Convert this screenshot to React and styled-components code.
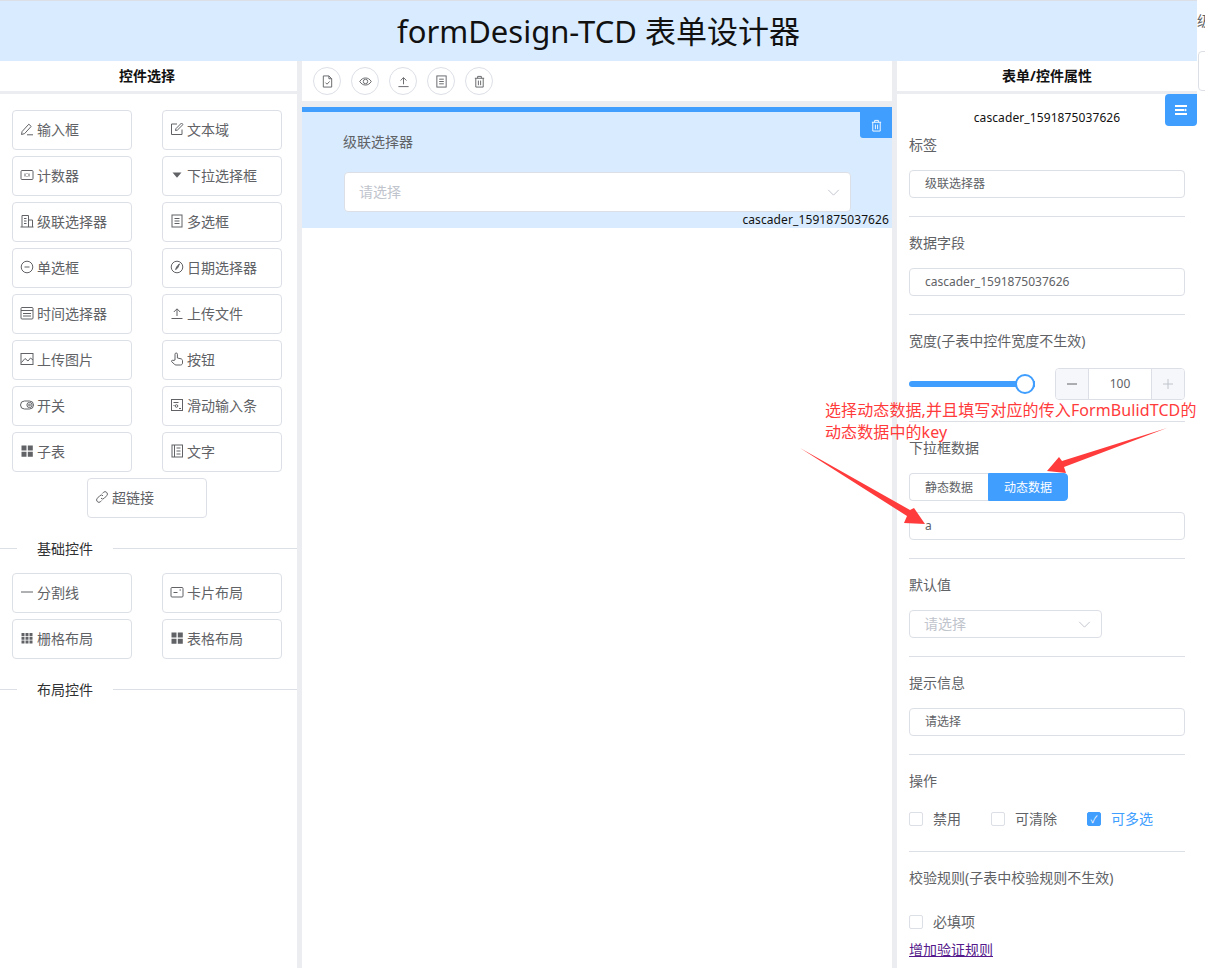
import styled, { createGlobalStyle } from "styled-components";

const GlobalStyle = createGlobalStyle`
  html, body {
    margin: 0;
    padding: 0;
    height: 100%;
    overflow: hidden;
    background: #fff;
    font-family: "Noto Sans", "Noto Sans CJK SC", sans-serif;
    font-size: 14px;
    color: #606266;
  }
  *, *::before, *::after { box-sizing: border-box; }
`;

// icons are drawn on a 14x14 box
const glyphs = {
  pen: <><path d="M1.500 12.500l.6-3L8.800 2.200l2.400 2.200-6.600 7.200z" /><path d="M7 12.800h6" /></>,
  edit: <><path d="M12 7.500v5H1.500V2H7" /><path d="M5.500 8.500l.4-1.800L11.500 1 13 2.500 7.400 8.100z" /></>,
  counter: <><rect x="1" y="2.500" width="12" height="9" rx="1" /><path d="M5 5.500v3M9 5.500v3M7 5v.8M7 8.200V9" /></>,
  caret: <path d="M2.500 4.500h9L7 9.800z" fill="#606266" stroke="none" />,
  cascade: <><path d="M2 13V1.500h6.500V13" /><path d="M8.500 6H12.500V13" /><path d="M.5 13h13M4 4.500h2.500M4 7h2.500M4 9.500h2.500" /></>,
  doc: <><rect x="2" y="1" width="10" height="12" /><path d="M4.500 4.500h5M4.500 7h5M4.500 9.500h5" /></>,
  radio: <><circle cx="7" cy="7" r="5.800" /><path d="M4.500 7h5" /></>,
  compass: <><circle cx="7" cy="7" r="5.800" /><path d="M9.500 3.800L7.600 8 5.600 9.600 6.600 7z" fill="#606266" /></>,
  calendar: <><rect x="1" y="1.500" width="12" height="11.500" rx="1" /><path d="M1 4.500h12M3 7.500h8M3 10h8" /></>,
  upload: <><path d="M1.500 12.500h11" /><path d="M7 10V3M3.800 6L7 2.800 10.200 6" /></>,
  picture: <><rect x="1" y="1.500" width="12" height="11" /><path d="M1.500 10.500L5 6.500l3 2.500 2.500-3L13 8" /></>,
  hand: <path d="M5 8V2.200a1.200 1.200 0 0 1 2.400 0V6l3.600.8c1 .3 1.500 1 1.500 2v2.200c0 1.200-.8 2-2 2H6c-.8 0-1.300-.3-1.800-1L1.600 9.600c-.5-.8.5-1.800 1.400-1.100z" />,
  toggle: <><rect x=".5" y="3" width="13" height="8" rx="4" /><circle cx="9.500" cy="7" r="2.600" /><circle cx="9.500" cy="7" r=".9" /></>,
  slider: <><rect x="1.500" y="1.500" width="11" height="11" /><path d="M3.500 4.500h5M3.500 7.500h1M9 10.500h2" /><circle cx="6.500" cy="8" r="1.300" /></>,
  grid: <path d="M1.500 1.500h5v5h-5zM7.800 1.500h5v5h-5zM1.500 7.800h5v5h-5zM7.800 7.800h5v5h-5z" fill="#606266" stroke="none" />,
  book: <><rect x="2" y="1" width="10.500" height="12" /><path d="M4.500 1v12M6.500 4h4M6.500 7h4M6.500 10h4" /></>,
  link: <><path d="M6 8.200a2.300 2.300 0 0 0 3.300 0l2.400-2.500a2.300 2.300 0 0 0-3.300-3.300L7.300 3.500" /><path d="M8 5.800a2.300 2.300 0 0 0-3.300 0L2.300 8.300a2.300 2.300 0 0 0 3.300 3.300l1.100-1.100" /></>,
  line: <path d="M1 7h12" />,
  card: <><rect x="1" y="2.500" width="12" height="9.500" rx="1" /><path d="M3.500 7.500h4M9.500 5h1.500" /></>,
  table: <path d="M1.500 2h3v3h-3zM5.500 2h3v3h-3zM9.500 2h3v3h-3zM1.500 5.700h3v3h-3zM5.500 5.700h3v3h-3zM9.500 5.700h3v3h-3zM1.500 9.400h3v3h-3zM5.500 9.400h3v3h-3zM9.500 9.400h3v3h-3z" fill="#606266" stroke="none" />,
  fileCheck: <><path d="M2.500 1h6l3 3v9h-9z" /><path d="M8.500 1v3h3M4.800 8.200l1.700 1.700 2.800-3" /></>,
  eye: <><path d="M.8 7C2.300 4.500 4.400 3.200 7 3.200S11.700 4.500 13.200 7C11.700 9.500 9.600 10.800 7 10.800S2.300 9.500.8 7z" /><circle cx="7" cy="7" r="2.400" /></>,
  trash: <path d="M2 3.500h10M5 3.500V1.500h4v2M3 3.500V13h8V3.500M5.800 6v5M8.200 6v5" />,
  menu: <path d="M1 2h12v2H1zM1 6h9.500V8H1zM11 5.500L13 7l-2 1.500zM1 10h12v2H1z" fill="#fff" stroke="none" />,
};

const Icon = ({ name, size = 14, color = "#606266" }) => (
  <svg width={size} height={size} viewBox="0 0 14 14" fill="none" stroke={color} strokeWidth="1" style={{ flex: "none" }}>
    {glyphs[name]}
  </svg>
);

const basicItems = [
  ["pen", "输入框"], ["edit", "文本域"],
  ["counter", "计数器"], ["caret", "下拉选择框"],
  ["cascade", "级联选择器"], ["doc", "多选框"],
  ["radio", "单选框"], ["compass", "日期选择器"],
  ["calendar", "时间选择器"], ["upload", "上传文件"],
  ["picture", "上传图片"], ["hand", "按钮"],
  ["toggle", "开关"], ["slider", "滑动输入条"],
  ["grid", "子表"], ["book", "文字"],
  ["link", "超链接"],
];

const layoutItems = [
  ["line", "分割线"], ["card", "卡片布局"],
  ["table", "栅格布局"], ["grid", "表格布局"],
];

const toolbarIcons = ["fileCheck", "eye", "upload", "doc", "trash"];

const App = () => {
  return (
    <Page>
      <GlobalStyle />
      <Main>
        <Header>formDesign-TCD 表单设计器</Header>
        <Columns>
          <LeftPanel>
            <PanelTitle $right={3}>控件选择</PanelTitle>
            <ItemGrid $top={16}>
              {basicItems.map(([icon, text]) => (
                <Item key={text}><Icon name={icon} />{text}</Item>
              ))}
            </ItemGrid>
            <Divider $top={20}><span>基础控件</span></Divider>
            <ItemGrid $top={15}>
              {layoutItems.map(([icon, text]) => (
                <Item key={text}><Icon name={icon} />{text}</Item>
              ))}
            </ItemGrid>
            <Divider $top={20}><span>布局控件</span></Divider>
          </LeftPanel>

          <Canvas>
            <Toolbar>
              {toolbarIcons.map((icon) => (
                <RoundButton key={icon}><Icon name={icon} size={13} /></RoundButton>
              ))}
            </Toolbar>
            <Stage>
              <Selected>
                <DeleteTab><Icon name="trash" size={13} color="#fff" /></DeleteTab>
                <SelectedLabel>级联选择器</SelectedLabel>
                <CascadeInput>
                  请选择
                  <Chevron viewBox="0 0 14 8"><path d="M1 1l6 6 6-6" /></Chevron>
                </CascadeInput>
                <SelectedId>cascader_1591875037626</SelectedId>
              </Selected>
            </Stage>
          </Canvas>

          <RightPanel>
            <PanelTitle>表单/控件属性</PanelTitle>
            <Props>
              <MenuTab><Icon name="menu" size={14} color="#fff" /></MenuTab>
              <PropId>cascader_1591875037626</PropId>
              <Field $top={0}>
                <FieldLabel>标签</FieldLabel>
                <TextInput>级联选择器</TextInput>
              </Field>
              <Field>
                <FieldLabel>数据字段</FieldLabel>
                <TextInput>cascader_1591875037626</TextInput>
              </Field>
              <Field $bottom={21}>
                <FieldLabel $gap={7}>宽度(子表中控件宽度不生效)</FieldLabel>
                <SliderRow>
                  <SliderTrack><SliderKnob /></SliderTrack>
                  <NumberBox>
                    <Stepper>
                      <StepIcon viewBox="0 0 10 10" $color="#606266"><path d="M0 5h10" /></StepIcon>
                    </Stepper>
                    <NumberValue>100</NumberValue>
                    <Stepper>
                      <StepIcon viewBox="0 0 10 10" $color="#c0c4cc"><path d="M0 5h10M5 0v10" /></StepIcon>
                    </Stepper>
                  </NumberBox>
                </SliderRow>
              </Field>
              <Field>
                <FieldLabel>下拉框数据</FieldLabel>
                <RadioGroup>
                  <RadioButton>静态数据</RadioButton>
                  <RadioButton $active>动态数据</RadioButton>
                </RadioGroup>
                <TextInput $top={11}>a</TextInput>
              </Field>
              <Field>
                <FieldLabel>默认值</FieldLabel>
                <SelectBox>
                  请选择
                  <Chevron viewBox="0 0 14 8"><path d="M1 1l6 6 6-6" /></Chevron>
                </SelectBox>
              </Field>
              <Field>
                <FieldLabel>提示信息</FieldLabel>
                <TextInput>请选择</TextInput>
              </Field>
              <Field $bottom={22}>
                <FieldLabel $gap={8}>操作</FieldLabel>
                <CheckRow>
                  <Check>禁用</Check>
                  <Check>可清除</Check>
                  <Check $checked>可多选</Check>
                </CheckRow>
              </Field>
              <Field $bottom={0} $plain>
                <FieldLabel $gap={14}>校验规则(子表中校验规则不生效)</FieldLabel>
                <Check>必填项</Check>
                <RuleLink href="#">增加验证规则</RuleLink>
              </Field>
            </Props>
          </RightPanel>
        </Columns>
      </Main>

      <Strip>
        <StripLabel>级联</StripLabel>
        <StripBox />
      </Strip>

      <Note>
        选择动态数据,并且填写对应的传入FormBulidTCD的
        <br />
        动态数据中的key
      </Note>
      <Arrows viewBox="0 0 1205 968">
        <polygon points="800,448 910,510 914,508 925,524 904,523 907,516" />
        <polygon points="1167,428 1062,461 1059,457 1047,471 1066,473 1064,467" />
      </Arrows>
    </Page>
  );
};

export default App;

//style
const Page = styled.div`
  position: relative;
  display: flex;
  width: 1205px;
  height: 968px;
  overflow: hidden;
`;

const Main = styled.div`
  display: flex;
  flex: none;
  flex-direction: column;
  width: 1197px;
  height: 100%;
  background: #ecedf1;
`;

const Header = styled.div`
  flex: none;
  height: 61px;
  border-top: 1px solid #dcdfe6;
  background: #d9ecff;
  color: #111;
  font-size: 31px;
  line-height: 61px;
  text-align: center;
`;

const Columns = styled.div`
  display: flex;
  flex: 1;
  gap: 5px;
  min-height: 0;
`;

const LeftPanel = styled.div`
  flex: none;
  width: 297px;
  background: #fff;
`;

const PanelTitle = styled.div`
  height: 33px;
  padding-right: ${(p) => p.$right || 0}px;
  border-bottom: 3px solid #ecedf1;
  background: #fff;
  color: #111;
  font-size: 14px;
  font-weight: 700;
  line-height: 30px;
  text-align: center;
`;

const ItemGrid = styled.div`
  display: flex;
  flex-wrap: wrap;
  justify-content: center;
  gap: 6px 30px;
  width: 270px;
  margin: ${(p) => p.$top}px 0 0 12px;
`;

const Item = styled.div`
  display: flex;
  align-items: center;
  gap: 3px;
  width: 120px;
  height: 40px;
  padding: 0 0 2px 7px;
  border: 1px solid #dcdfe6;
  border-radius: 4px;
  background: #fff;
  color: #606266;
  font-size: 14px;
`;

const Divider = styled.div`
  display: flex;
  align-items: center;
  height: 20px;
  margin-top: ${(p) => p.$top}px;
  color: #303133;

  &::before {
    content: "";
    width: 17px;
    height: 1px;
    background: #dcdfe6;
  }

  &::after {
    content: "";
    flex: 1;
    height: 1px;
    background: #dcdfe6;
  }

  span {
    padding: 0 20px;
    font-size: 14px;
  }
`;

const Canvas = styled.div`
  display: flex;
  flex: none;
  flex-direction: column;
  width: 590px;
`;

const Toolbar = styled.div`
  display: flex;
  flex: none;
  align-items: center;
  gap: 10px;
  height: 40px;
  padding-left: 11px;
  background: #fff;
`;

const RoundButton = styled.div`
  display: flex;
  align-items: center;
  justify-content: center;
  width: 28px;
  height: 28px;
  border: 1px solid #dcdfe6;
  border-radius: 50%;
  background: #fff;
`;

const Stage = styled.div`
  flex: 1;
  margin-top: 6px;
  background: #fff;
`;

const Selected = styled.div`
  position: relative;
  height: 121px;
  padding: 10px 41px 0 42px;
  border-top: 5px solid #409eff;
  background: #d9ecff;
`;

const DeleteTab = styled.div`
  position: absolute;
  top: 0;
  right: 0;
  display: flex;
  align-items: center;
  justify-content: center;
  width: 32px;
  height: 26px;
  border-bottom-left-radius: 3px;
  background: #409eff;
`;

const SelectedLabel = styled.div`
  height: 40px;
  margin-left: -1px;
  color: #606266;
  font-size: 14px;
  line-height: 40px;
`;

const CascadeInput = styled.div`
  position: relative;
  height: 40px;
  margin-top: 10px;
  padding-left: 14px;
  border: 1px solid #dcdfe6;
  border-radius: 4px;
  background: #fff;
  color: #c0c4cc;
  font-size: 14px;
  line-height: 38px;
`;

const Chevron = styled.svg`
  position: absolute;
  top: 50%;
  right: 10px;
  width: 13px;
  height: 7px;
  margin-top: -3px;
  fill: none;
  stroke: #c0c4cc;
  stroke-width: 1.1;
`;

const SelectedId = styled.div`
  position: absolute;
  right: 3px;
  bottom: 0;
  color: #111;
  font-size: 12px;
  letter-spacing: 0.1px;
  line-height: 17px;
`;

const RightPanel = styled.div`
  flex: none;
  width: 300px;
  background: #fff;
`;

const Props = styled.div`
  position: relative;
  height: calc(100% - 33px);
  padding: 14px 12px 0;
  background: #fff;
`;

const MenuTab = styled.div`
  position: absolute;
  top: 0;
  right: 0;
  display: flex;
  align-items: center;
  justify-content: center;
  width: 32px;
  height: 32px;
  border-radius: 4px 0 4px 4px;
  background: #409eff;
`;

const PropId = styled.div`
  height: 17px;
  color: #111;
  font-size: 12px;
  letter-spacing: 0.1px;
  line-height: 19px;
  text-align: center;
`;

const Field = styled.div`
  padding-top: ${(p) => (p.$top === undefined ? 6 : p.$top)}px;
  padding-bottom: ${(p) => (p.$bottom === undefined ? 18 : p.$bottom)}px;
  border-bottom: ${(p) => (p.$plain ? "none" : "1px solid #dcdfe6")};
`;

const FieldLabel = styled.div`
  height: 40px;
  margin-bottom: ${(p) => p.$gap || 5}px;
  color: #606266;
  font-size: 14px;
  line-height: 40px;
`;

const TextInput = styled.div`
  height: 28px;
  margin-top: ${(p) => p.$top || 0}px;
  padding-left: 15px;
  border: 1px solid #dcdfe6;
  border-radius: 4px;
  background: #fff;
  color: #606266;
  font-size: 12px;
  line-height: 26px;
`;

const SliderRow = styled.div`
  display: flex;
  align-items: center;
  gap: 20px;
`;

const SliderTrack = styled.div`
  position: relative;
  flex: none;
  width: 126px;
  height: 6px;
  border-radius: 3px 0 0 3px;
  background: #409eff;
`;

const SliderKnob = styled.div`
  position: absolute;
  top: -7px;
  right: 0;
  width: 20px;
  height: 20px;
  border: 2px solid #409eff;
  border-radius: 50%;
  background: #fff;
`;

const NumberBox = styled.div`
  display: flex;
  flex: 1;
  height: 32px;
  border: 1px solid #dcdfe6;
  border-radius: 4px;
  overflow: hidden;
`;

const Stepper = styled.div`
  display: flex;
  flex: none;
  align-items: center;
  justify-content: center;
  width: 32px;
  background: #f5f7fa;
`;

const StepIcon = styled.svg`
  width: 10px;
  height: 10px;
  fill: none;
  stroke: ${(p) => p.$color};
  stroke-width: 1;
`;

const NumberValue = styled.div`
  flex: 1;
  border-right: 1px solid #dcdfe6;
  border-left: 1px solid #dcdfe6;
  color: #606266;
  font-size: 12px;
  line-height: 30px;
  text-align: center;
`;

const RadioGroup = styled.div`
  display: flex;
  height: 28px;
`;

const RadioButton = styled.div`
  width: ${(p) => (p.$active ? 80 : 79)}px;
  border: 1px solid ${(p) => (p.$active ? "#409eff" : "#dcdfe6")};
  border-right-width: ${(p) => (p.$active ? 1 : 0)}px;
  border-radius: ${(p) => (p.$active ? "0 4px 4px 0" : "4px 0 0 4px")};
  background: ${(p) => (p.$active ? "#409eff" : "#fff")};
  color: ${(p) => (p.$active ? "#fff" : "#606266")};
  font-size: 12px;
  line-height: 27px;
  text-align: center;
`;

const SelectBox = styled.div`
  position: relative;
  width: 193px;
  height: 28px;
  padding-left: 14px;
  border: 1px solid #dcdfe6;
  border-radius: 4px;
  color: #c0c4cc;
  font-size: 14px;
  line-height: 25px;
`;

const CheckRow = styled.div`
  display: flex;
  gap: 30px;
`;

const Check = styled.div`
  display: flex;
  flex: none;
  align-items: center;
  height: 20px;
  color: ${(p) => (p.$checked ? "#409eff" : "#606266")};
  font-size: 14px;
  line-height: 20px;
  white-space: nowrap;

  &::before {
    content: "${(p) => (p.$checked ? "✓" : "")}";
    flex: none;
    width: 14px;
    height: 14px;
    margin-right: 10px;
    border: 1px solid ${(p) => (p.$checked ? "#409eff" : "#dcdfe6")};
    border-radius: 2px;
    background: ${(p) => (p.$checked ? "#409eff" : "#fff")};
    color: #fff;
    font-size: 10px;
    line-height: 12px;
    text-align: center;
  }
`;

const RuleLink = styled.a`
  display: inline-block;
  margin-top: 8px;
  color: #551a8b;
  font-size: 14px;
  line-height: 20px;
`;

const Strip = styled.div`
  flex: none;
  width: 8px;
  overflow: hidden;
`;

const StripLabel = styled.div`
  width: 30px;
  margin-top: 11px;
  color: #606266;
  font-size: 14px;
  line-height: 20px;
`;

const StripBox = styled.div`
  width: 40px;
  height: 40px;
  margin: 20px 0 0 1px;
  border: 1px solid #dcdfe6;
  border-radius: 4px;
`;

const Note = styled.div`
  position: absolute;
  top: 399px;
  left: 825px;
  width: 380px;
  color: #ff3b3b;
  font-size: 16px;
  letter-spacing: 0.1px;
  line-height: 22px;
  white-space: nowrap;
`;

const Arrows = styled.svg`
  position: absolute;
  top: 0;
  left: 0;
  width: 1205px;
  height: 968px;
  pointer-events: none;

  polygon {
    fill: #ff3b3b;
  }
`;
